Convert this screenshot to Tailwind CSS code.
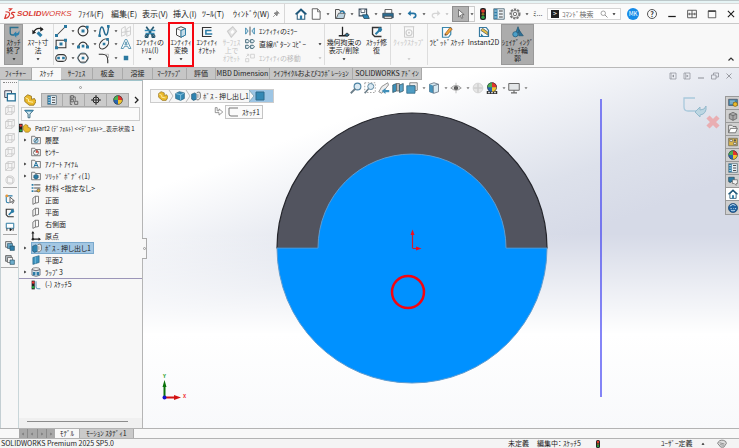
<!DOCTYPE html>
<html lang="ja">
<head>
  <meta charset="UTF-8">
  <meta name="viewport" content="width=device-width, initial-scale=1.0">
  <script src="https://cdn.jsdelivr.net/npm/@tailwindcss/browser@4"></script>
  <title>SOLIDWORKS - Part2</title>
</head>
<body class="h-screen flex flex-col overflow-hidden bg-[#f7f7f7] text-[#1c1c1c] text-[7px] leading-[7px] whitespace-nowrap font-['Noto_Sans_CJK_JP',sans-serif] [font-feature-settings:'palt']">

  <!-- Icon sprite -->
  <svg class="hidden" aria-hidden="true">
    <symbol id="caret" viewBox="0 0 8 8"><path d="M1 2.500h6L4 6.500z" fill="currentColor"/></symbol>
    <symbol id="home" viewBox="0 0 16 16"><path d="M3 8v7h10V8L8 3z" fill="#fff" stroke="#2f5f7c" stroke-width="1.4"/><path d="M.8 8.5 8 1.8l7.2 6.7" fill="none" stroke="#1c567a" stroke-width="2"/><path d="M6.5 15v-5h3v5z" fill="#2d7ba6"/></symbol>
    <symbol id="page" viewBox="0 0 16 16"><path d="M3 1h7l3.5 3.5V15H3z" fill="#fdfdfd" stroke="#555" stroke-width="1.2"/><path d="M10 1v4h3.5" fill="none" stroke="#555"/></symbol>
    <symbol id="open" viewBox="0 0 16 16"><path d="M2 14V2h5l1 2h5v10z" fill="#eee" stroke="#444" stroke-width="1.2"/><path d="M3 14 6 7h9l-2 7z" fill="#bcd3e0" stroke="#444"/><path d="M8 6q4-4 6 1" fill="none" stroke="#1f79ab" stroke-width="1.8"/></symbol>
    <symbol id="save" viewBox="0 0 16 16"><path d="M1.5 1.5h10v9h-10z" fill="#eef4f7" stroke="#345" stroke-width="1.4"/><path d="M4 2v4h5V2" fill="#fff" stroke="#345"/><path d="M6 9h7l2 5H8z" fill="#2b84b5" stroke="#245"/></symbol>
    <symbol id="print" viewBox="0 0 16 16"><path d="M4 7V2h9v5" fill="#fff" stroke="#555" stroke-width="1.2"/><path d="M1 7h14v6H1z" fill="#2c6d92" stroke="#2b4252"/><path d="M3 11h10v3H3z" fill="#ddd" stroke="#444"/></symbol>
    <symbol id="undo" viewBox="0 0 16 16"><path d="M3 7h7q4 0 4 3.5T10 14" fill="none" stroke="currentColor" stroke-width="2.6"/><path d="M1 7l5-5v9z" fill="currentColor"/></symbol>
    <symbol id="redo" viewBox="0 0 16 16"><path d="M13 7H6q-4 0-4 3.5T6 14" fill="none" stroke="#d5d5d5" stroke-width="2"/><path d="M15 7l-5-5v9z" fill="#d5d5d5"/></symbol>
    <symbol id="pointer" viewBox="0 0 16 16"><path d="M4 1v12l3-3 2 5 2-1-2-5h4z" fill="#f4f4f4" stroke="#444"/></symbol>
    <symbol id="traffic" viewBox="0 0 16 16"><rect x="4" y="0" width="8" height="16" rx="3" fill="#222"/><circle cx="8" cy="4" r="2.4" fill="#e2392b"/><circle cx="8" cy="8.3" r="1.8" fill="#8a7a22"/><circle cx="8" cy="12.4" r="2.2" fill="#2ca045"/></symbol>
    <symbol id="props" viewBox="0 0 16 16"><path d="M1 1h14v14H1z" fill="#e8eff3" stroke="#3c5868"/><path d="M1.5 1.5H6v13H1.5z" fill="#2f7ea9"/><path d="M8 4h5M8 8h5M8 12h5" stroke="#444" stroke-width="1.5"/><path d="M2 4h3M2 8h3M2 12h3" stroke="#fff"/></symbol>
    <symbol id="gear" viewBox="0 0 16 16"><circle cx="8" cy="8" r="6.2" fill="none" stroke="#777" stroke-width="2.4" stroke-dasharray="3 1.5"/><circle cx="8" cy="8" r="5" fill="#f4f4f4" stroke="#666"/><circle cx="8" cy="8" r="2.3" fill="none" stroke="#666" stroke-width="1.2"/></symbol>
    <symbol id="pin" viewBox="0 0 16 16"><path d="M2 14l5-5M9 1l6 6M10 3 6 6 4 6l6 6 0-2 3-4z" fill="#888" stroke="#777" stroke-width="1.3"/></symbol>
    <symbol id="glass" viewBox="0 0 16 16"><circle cx="6.5" cy="6.5" r="4.5" fill="none" stroke="#777" stroke-width="1.3"/><path d="M10 10l5 5" stroke="#777" stroke-width="1.6"/></symbol>
    <symbol id="close" viewBox="0 0 16 16"><path d="M3 3l10 10M13 3 3 13" stroke="currentColor" stroke-width="1.7"/></symbol>
    <symbol id="mini" viewBox="0 0 16 16"><path d="M2 12h12" stroke="currentColor" stroke-width="2"/></symbol>
    <symbol id="dock" viewBox="0 0 16 16"><path d="M1 2h14v12H1zM8 2v12M1 8h14" fill="none" stroke="#555" stroke-width="1.5"/><path d="M4 6v4M12 6v4" stroke="#555"/></symbol>
    <symbol id="max" viewBox="0 0 16 16"><path d="M2 3h12v11H2z" fill="none" stroke="#444" stroke-width="1.3"/><path d="M2 3.5h12" stroke="#444" stroke-width="2.5"/></symbol>
    <symbol id="restore" viewBox="0 0 16 16"><path d="M1 6h9v8H1zM5 6V2h10v8h-5" fill="none" stroke="currentColor" stroke-width="1.5"/></symbol>
    <symbol id="paneL" viewBox="0 0 16 16"><path d="M2 2h12v12H2z" fill="none" stroke="currentColor" stroke-width="1.4"/><path d="M10 5v6L6 8z" fill="currentColor"/><path d="M4.500 2v12" stroke="currentColor"/></symbol>
    <symbol id="paneR" viewBox="0 0 16 16"><path d="M2 2h12v12H2z" fill="none" stroke="currentColor" stroke-width="1.4"/><path d="M7 5v6l4-3z" fill="currentColor"/><path d="M5 2v12" stroke="currentColor"/></symbol>

    <symbol id="exitSketch" viewBox="0 0 16 16"><path d="M14 2H3v7q0 3 3 3h2" fill="none" stroke="#2b708f" stroke-width="1.8"/><path d="M7 11l4-4v2.500q3 0 4-4 1.500 7-4 7.500v2.500z" fill="#2b7fac"/></symbol>
    <symbol id="dimension" viewBox="0 0 16 16"><path d="M2 9q3-8 12-5" fill="none" stroke="#222" stroke-width="1.8"/><path d="M.5 5v6l5-2zM11 .5v7l4.500-3z" fill="#222"/><path d="M6 10l3-3 5 5-3 3z" fill="#2b7ca6"/></symbol>
    <symbol id="line" viewBox="0 0 16 16"><path d="M2 14 14 2" stroke="#444" stroke-width="1.4"/><path d="M0 12h4v4H0zM12 0h4v4h-4z" fill="#2a789f"/></symbol>
    <symbol id="circle" viewBox="0 0 16 16"><circle cx="8" cy="8" r="6.5" fill="none" stroke="#333" stroke-width="1.5"/><path d="M6 6h4v4H6zM12 1h3.500v3.500H12z" fill="#2a789f"/></symbol>
    <symbol id="spline" viewBox="0 0 16 16"><path d="M2 14C3 0 6 0 8 8s5 8 6-6" fill="none" stroke="#24688d" stroke-width="1.9"/><path d="M.5 12.500H4V16H.5zM12 0h3.500v3.500H12z" fill="#2a789f"/></symbol>
    <symbol id="plane3" viewBox="0 0 16 16"><path d="M2 5l5-3v11l-5 2zM9 5l5-3v11l-5 2zM2 10l12-2" fill="none" stroke="#ccc" stroke-width="1.2"/></symbol>
    <symbol id="rect" viewBox="0 0 16 16"><path d="M1.500 3h13v10h-13z" fill="none" stroke="#333" stroke-width="1.4"/><path d="M6 6h4v4H6zM0 11h4v4H0zM12 1h4v4h-4z" fill="#2a789f"/></symbol>
    <symbol id="arc" viewBox="0 0 16 16"><path d="M2 12a6 6.500 0 0 1 12 0" fill="none" stroke="#333" stroke-width="1.5"/><path d="M0 10h4v4H0zM12 10h4v4h-4zM6.300 9h3.500v3.500H6.300z" fill="#2a789f"/></symbol>
    <symbol id="ellipse" viewBox="0 0 16 16"><ellipse cx="8" cy="8" rx="7.500" ry="5" transform="rotate(-50 8 8)" fill="none" stroke="#333" stroke-width="1.3"/><path d="M6.300 6.300h3.500v3.500H6.300zM11 0h3.500v3.500H11z" fill="#2a789f"/></symbol>
    <symbol id="textA" viewBox="0 0 16 16"><path d="M1.500 14 7 2h2l5.500 12h-3l-1.300-3H6l-1.500 3zM6.500 9h3L8 5z" fill="#fff" stroke="#4d8dab" stroke-width="1.2"/></symbol>
    <symbol id="slot" viewBox="0 0 16 16"><rect x="1" y="3.500" width="14" height="9" rx="4.500" fill="none" stroke="#333" stroke-width="1.400"/><path d="M3 6.300h3.500v3.500H3zM9.500 6.300H13v3.500H9.500z" fill="#2a789f"/></symbol>
    <symbol id="polygon" viewBox="0 0 16 16"><circle cx="8" cy="8" r="7" fill="none" stroke="#6b95ab"/><path d="M4.500 2.500h7L15 8l-3.500 5.500h-7L1 8z" fill="none" stroke="#333" stroke-width="1.300"/><path d="M6.300 6.300h3.500v3.500H6.300z" fill="#2a789f"/></symbol>
    <symbol id="fillet" viewBox="0 0 16 16"><path d="M1 3h5q7 0 7 8v4" fill="none" stroke="#333" stroke-width="1.500"/><path d="M9 3h5v5" fill="none" stroke="#aaa"/></symbol>
    <symbol id="point" viewBox="0 0 16 16"><path d="M5 5h6v6H5z" fill="#2a789f"/></symbol>
    <symbol id="trim" viewBox="0 0 16 16"><path d="M3 1l10 14M13 1 3 15" stroke="#24566f" stroke-width="2.200"/><path d="M1 6h14M2 10h12" stroke="#348ab5" stroke-width="1.800"/><circle cx="3.500" cy="13.500" r="2" fill="none" stroke="#24566f" stroke-width="1.500"/><circle cx="12.500" cy="13.500" r="2" fill="none" stroke="#24566f" stroke-width="1.500"/></symbol>
    <symbol id="convert" viewBox="0 0 16 16"><path d="M2 3.500 8 1l6 2.500v8.500l-6 3-6-3z" fill="#fafafa" stroke="#333" stroke-width="1.200"/><path d="M2 3.500 8 6l6-2.500M8 6v9" fill="none" stroke="#666"/><path d="M8 6l6-2.500V12l-6 3z" fill="#c5dbe7" stroke="#2e7fa8" stroke-width="1.300"/></symbol>
    <symbol id="offset" viewBox="0 0 16 16"><path d="M14 2H2v12h12" fill="none" stroke="#333" stroke-width="1.500"/><path d="M14 6H6.500v4.500H15" fill="none" stroke="#2a7ca6" stroke-width="2"/></symbol>
    <symbol id="surfOffset" viewBox="0 0 16 16"><path d="M2 7l7-6 5 6-7 8z" fill="#e5e5e5" stroke="#ccc" stroke-width="1.500"/><path d="M6 8l3-3 2 3-3 3z" fill="#fff"/></symbol>
    <symbol id="mirror" viewBox="0 0 16 16"><path d="M1 3v10l4-5zM15 3v10l-4-5z" fill="#d7e8f0" stroke="#2e7fa8" stroke-width="1.300"/><path d="M8 1v14" stroke="#333" stroke-width="1.300"/></symbol>
    <symbol id="pattern" viewBox="0 0 16 16"><g fill="#e6f0f5" stroke="#345b6d" stroke-width="1.400"><path d="M1 1h4l2 2.300L5 6H1zM9 1h4l2 2.300L13 6H9zM1 10h4l2 2.300L5 15H1zM9 10h4l2 2.300L13 15H9z"/></g></symbol>
    <symbol id="move" viewBox="0 0 16 16"><path d="M1 9h5v5H1zM9 2h6v6H9zM2 6l4-4M6 2H3M6 2v3" fill="none" stroke="#ccc" stroke-width="1.300"/></symbol>
    <symbol id="relations" viewBox="0 0 16 16"><path d="M6 1v12M1 13h10" stroke="#222" stroke-width="1.700"/><path d="M9 12q3-5 6 0-3 4-6 0z" fill="#34718f" stroke="#222"/></symbol>
    <symbol id="repair" viewBox="0 0 16 16"><path d="M14 2H2v9l3 3h9" fill="none" stroke="#333" stroke-width="1.800"/><path d="M6 11l5-5" stroke="#2a7ca6" stroke-width="2.600"/><path d="M10 2q4-1 5 3l-2 3-4-1z" fill="#2a7ca6"/></symbol>
    <symbol id="snap" viewBox="0 0 16 16"><path d="M1 1h14M2 1v14h12V1" fill="none" stroke="#ccc" stroke-width="1.300"/><circle cx="8" cy="9" r="4" fill="none" stroke="#ccc" stroke-width="1.500"/><circle cx="8" cy="9" r="1.300" fill="#ccc"/></symbol>
    <symbol id="rapid" viewBox="0 0 16 16"><path d="M2 2h11v9l-3 4H2z" fill="#f8fbfc" stroke="#3a87ad" stroke-width="1.600"/><path d="M5 11 12 2l3 2-7 8z" fill="#f1a93b" stroke="#9e5622"/><path d="M5 11l3 1-3 1z" fill="#333"/></symbol>
    <symbol id="instant" viewBox="0 0 16 16"><path d="M2 2h9l3 4v8H2z" fill="#f7fafb" stroke="#3579a0" stroke-width="1.600"/><path d="M4 6l9 6v-4L6 3z" fill="#eabf42" stroke="#4a5c66"/><path d="M4 10l4 4H4z" fill="#2a7ca6"/></symbol>
    <symbol id="shade" viewBox="0 0 16 16"><path d="M5 9 8 1l3 8z" fill="#2b7ba6" stroke="#245672"/><circle cx="4.500" cy="11" r="3.500" fill="#4b9fc7" stroke="#235a78"/><path d="M9 5l6 8H9z" fill="#2f7096" stroke="#235a78"/></symbol>

    <symbol id="part" viewBox="0 0 16 16"><path d="M1 4l4-3 5 2v4l4-1 2 4-3 5-6 0-6-5z" fill="#eab92b" stroke="#8b6914"/><path d="M2 5l4 2v3l6 1" fill="none" stroke="#fff1b0" stroke-width="1.300"/></symbol>
    <symbol id="config" viewBox="0 0 16 16"><path d="M3 1h4v4H3zM3 7h4v4H3zM9 10h5v5H9zM2 1v14h3M7 3h3v6" fill="none" stroke="#555" stroke-width="1.300"/></symbol>
    <symbol id="target" viewBox="0 0 16 16"><circle cx="8" cy="8" r="4.800" fill="none" stroke="#222" stroke-width="1.600"/><path d="M8 0v16M0 8h16" stroke="#222" stroke-width="1.500"/></symbol>
    <symbol id="ball" viewBox="0 0 16 16"><circle cx="8" cy="8" r="7.300" fill="#2865ae"/><path d="M8 8V.7A7.300 7.300 0 0 0 .7 8z" fill="#4db04f"/><path d="M8 8V.7A7.300 7.300 0 0 1 15.300 8z" fill="#e2352c"/><path d="M8 8h7.300A7.300 7.300 0 0 1 8 15.300z" fill="#f2c52e"/><circle cx="8" cy="8" r="7" fill="none" stroke="#333" stroke-width=".8"/></symbol>
    <symbol id="funnel" viewBox="0 0 16 16"><path d="M1 2h14l-5.500 6v6h-3V8z" fill="#d8edf5" stroke="#37667d" stroke-width="1.500"/><path d="M2 3h12" stroke="#2a7ca6" stroke-width="2"/></symbol>
    <symbol id="folder" viewBox="0 0 16 16"><path d="M1 14V2h5l1 2h8v10z" fill="#f6f6f6" stroke="#555" stroke-width="1.200"/></symbol>
    <symbol id="history" viewBox="0 0 16 16"><use href="#folder"/><circle cx="8" cy="9" r="3.500" fill="#b9d9e8" stroke="#276e94"/><path d="M6 11l5-6" stroke="#26343c" stroke-width="1.300"/></symbol>
    <symbol id="sensor" viewBox="0 0 16 16"><use href="#folder"/><circle cx="8" cy="9" r="4" fill="#fff" stroke="#333"/><path d="M8 9V5a4 4 0 0 1 4 4z" fill="#d9483e"/><path d="M5 6l3 3" stroke="#333"/></symbol>
    <symbol id="note" viewBox="0 0 16 16"><use href="#folder"/><path d="M4.500 13 8 5l3.500 8M6 10.500h4" fill="none" stroke="#20719b" stroke-width="1.600"/></symbol>
    <symbol id="solids" viewBox="0 0 16 16"><use href="#folder"/><path d="M4.500 7 8 5.500 11.500 7v4L8 13l-3.500-2z" fill="#2b7aa4" stroke="#1f4e67"/></symbol>
    <symbol id="material" viewBox="0 0 16 16"><path d="M1 3h3M1 8h3M1 13h3" stroke="#2a7ca6" stroke-width="2.500"/><path d="M5 3h10M5 8h10M5 13h8" stroke="#444" stroke-width="1.500"/><circle cx="12" cy="12" r="2.500" fill="#e8b93b" stroke="#444"/></symbol>
    <symbol id="plane" viewBox="0 0 16 16"><path d="M3 5l4-3v11l-4 2zM7 2h5v10l-5 1" fill="#fafafa" stroke="#555" stroke-width="1.200"/></symbol>
    <symbol id="planeBlue" viewBox="0 0 16 16"><path d="M3 4l10-3v11L3 15z" fill="#3d93bf" stroke="#245d7c"/><path d="M7 3v11" stroke="#8fcbe6"/></symbol>
    <symbol id="origin" viewBox="0 0 16 16"><path d="M3 2v11h11" fill="none" stroke="#222" stroke-width="1.800"/><path d="M.5 4 3 0l2.500 4zM12 10.500l4 2.500-4 2.500z" fill="#222"/><circle cx="3" cy="13" r="2" fill="#222"/></symbol>
    <symbol id="extrude" viewBox="0 0 16 16"><path d="M1 5l5-2 3 2v8l-5 2-3-2z" fill="#2f83b0" stroke="#1e4f6a"/><path d="M9 3q2-2 5-1l1 3v6q-3 5-6 3" fill="#ececec" stroke="#555" stroke-width="1.200"/><path d="M11 5v6" stroke="#666"/></symbol>
    <symbol id="wrap" viewBox="0 0 16 16"><ellipse cx="8" cy="3.500" rx="6.500" ry="2.500" fill="#eee" stroke="#555"/><path d="M1.500 4v9q6.500 4 13 0V4q-6.500 4-13 0z" fill="#d5e3ea" stroke="#445"/><path d="M3 8h4v5H3zM9 8h4v5H9z" fill="#2b7ba6"/></symbol>
    <symbol id="sketch" viewBox="0 0 16 16"><path d="M1 1h5v14H1z" fill="#222"/><circle cx="3.500" cy="4" r="2" fill="#e33"/><circle cx="3.500" cy="11.500" r="2" fill="#2a4"/><path d="M8 2v9q0 3 3 3h4" fill="none" stroke="#2e7fa8" stroke-width="1.300"/></symbol>
    <symbol id="partLight" viewBox="0 0 20 16"><path d="M0 1h6v14H0z" fill="#222"/><circle cx="3" cy="4" r="2" fill="#e33"/><circle cx="3" cy="12" r="2" fill="#2a4"/><path d="M7 5l4-3 4 2v3l4 1v4l-3 3-5 0-4-4z" fill="#eab92b" stroke="#8b6914"/></symbol>

    <symbol id="cubeBlue" viewBox="0 0 16 16"><path d="M1 4l6-3 8 2v9l-6 3-8-3z" fill="#3388b3" stroke="#1f5876"/><path d="M1 4l8 2 6-3M9 6v9" fill="none" stroke="#9fd2ea" stroke-width="1.200"/></symbol>
    <symbol id="cubes" viewBox="0 0 16 16"><path d="M1 1h9v9H1z" fill="#e9f1f5" stroke="#445" stroke-width="1.300"/><path d="M4.500 5H15v9.500H4.500z" fill="#fbfdfe" stroke="#277196" stroke-width="1.700"/></symbol>
    <symbol id="cubeWire" viewBox="0 0 16 16"><path d="M1 4h10v11H1zM1 4l4-3h10v10l-4 4M11 4l4-3M5 1v10h10M5 11l-4 4" fill="none" stroke="#c6c6c6" stroke-width="1.300"/></symbol>
    <symbol id="sphereWire" viewBox="0 0 16 16"><circle cx="8" cy="8" r="6.500" fill="none" stroke="#c4c4c4" stroke-width="1.300"/><path d="M4 3v9l8 1V5zM4 3l8 2" fill="none" stroke="#c4c4c4"/></symbol>
    <symbol id="pick" viewBox="0 0 16 16"><path d="M12 3H2v8q0 3 3 3h2" fill="none" stroke="#2b7ba6" stroke-width="1.700"/><path d="M8 5v9l2-2 2 3 1.500-1-1.500-3h3z" fill="#fff" stroke="#333" stroke-width="1.200"/><circle cx="3" cy="3" r="2.300" fill="#e89636"/></symbol>
    <symbol id="screenL" viewBox="0 0 16 16"><path d="M2 2h12v8H2z" fill="#fff" stroke="#2d7ba3" stroke-width="1.600"/><path d="M3 10v4M8 10v4l3-2M13 10v4" stroke="#333" stroke-width="1.500"/></symbol>
    <symbol id="layers" viewBox="0 0 16 16"><path d="M1 1h9v9H1z" fill="#e4ebee" stroke="#444" stroke-width="1.200"/><path d="M4 4h8v8H4z" fill="#62a4c5" stroke="#335566"/><path d="M8 8h7v7H8z" fill="#2f7fa9" stroke="#244b5e"/></symbol>
    <symbol id="layersOut" viewBox="0 0 16 16"><path d="M1 1h9v9H1z" fill="#b9c4c9" stroke="#444" stroke-width="1.200"/><path d="M4 4h8v8H4z" fill="#f2f2f2" stroke="#444"/><path d="M8 8h7v7H8z" fill="#6eaecd" stroke="#244b5e"/></symbol>

    <symbol id="zoomArea" viewBox="0 0 16 16"><path d="M1 1h14v13H1z" fill="none" stroke="#888" stroke-dasharray="2 2"/><circle cx="9" cy="6" r="4" fill="#dbeaf3" stroke="#5d87a0" stroke-width="1.300"/><path d="M6 9l-5 6" stroke="#6b7e89" stroke-width="2"/></symbol>
    <symbol id="zoomFit" viewBox="0 0 16 16"><circle cx="10" cy="6" r="4.500" fill="#dbeaf3" stroke="#4c82a2" stroke-width="1.500"/><path d="M7 9l-6 6" stroke="#6b7e89" stroke-width="2.400"/></symbol>
    <symbol id="prevView" viewBox="0 0 16 16"><path d="M13 1 5 6l-4 7 4 2 5-6 4-5z" fill="#eee" stroke="#777"/><path d="M5 12l5-4v2.500h5v3h-5V16z" fill="#418fb8"/></symbol>
    <symbol id="section" viewBox="0 0 16 16"><path d="M1 4l5-2v10l-5 2z" fill="#3b8eb8" stroke="#335566"/><path d="M6 2h4v10H6z" fill="#bbb" stroke="#666"/><path d="M10 4l5-2v10l-5 2z" fill="#5ba4c9" stroke="#335566"/></symbol>
    <symbol id="orient" viewBox="0 0 16 16"><path d="M5 1h10v10l-3 1V5H5z" fill="#eee" stroke="#666"/><path d="M1 5h11v10H1z" fill="#4e9cc3" stroke="#2d6584"/></symbol>
    <symbol id="display" viewBox="0 0 16 16"><path d="M2 3l6-2 6 2v10l-6 2-6-2z" fill="#d8e9f1" stroke="#567"/><path d="M7 5l-5-2v10l5 2z" fill="#4594bc"/><path d="M7 5l7-2M7 5v10" stroke="#567"/></symbol>
    <symbol id="eye" viewBox="0 0 16 16"><path d="M1 8q7-7 14 0-7 6-14 0z" fill="#ddd" stroke="#888"/><circle cx="8" cy="8" r="2.600" fill="#333"/><path d="M8 1v14" stroke="#aaa"/></symbol>
    <symbol id="ballGray" viewBox="0 0 16 16"><circle cx="8" cy="8" r="6.500" fill="#e6e6e6" stroke="#ccc"/><path d="M8 2v12M2 8h12" stroke="#cfcfcf" stroke-width="2"/></symbol>
    <symbol id="scene" viewBox="0 0 16 16"><path d="M1 12h14v4H1z" fill="#333"/><path d="M3 14h2M7 14h2M11 14h2" stroke="#fff" stroke-width="2"/><use href="#ball" width="14" height="14" x="1"/></symbol>
    <symbol id="monitor" viewBox="0 0 16 16"><path d="M1 2h14v9H1z" fill="#e3e6e8" stroke="#666" stroke-width="1.300"/><path d="M8 11v3M4 14.500h8" stroke="#666" stroke-width="1.500"/></symbol>
    <symbol id="bigArrow" viewBox="0 0 16 16"><path d="M2 1v8h6v4l6-5-6-5v3H5V1z" fill="#fff" stroke="#777" stroke-width="1.200"/></symbol>
    <symbol id="resources" viewBox="0 0 16 16"><path d="M1 2h14v10H1z" fill="#4589ad" stroke="#445"/><path d="M3 5h8M3 8h5" stroke="#e5f2f8"/><circle cx="11.500" cy="10" r="3.500" fill="#eab92b" stroke="#7c5d12"/></symbol>
    <symbol id="library" viewBox="0 0 16 16"><path d="M2 5l6-3 6 3v7l-6 3-6-3z" fill="#a7a7a7" stroke="#555"/><path d="M2 5l6 2.500L14 5M8 7.500V15" fill="none" stroke="#555"/></symbol>
    <symbol id="folderOpen" viewBox="0 0 16 16"><path d="M1 14V2h5l2 2h5v3" fill="#eee" stroke="#555" stroke-width="1.200"/><path d="M1 14 4 7h11l-3 7z" fill="#fff" stroke="#555" stroke-width="1.200"/></symbol>
    <symbol id="palette" viewBox="0 0 16 16"><path d="M1 2h14v12H1z" fill="#d9b44a" stroke="#555"/><path d="M3 4h4v3H3zM9 9h4v3H9z" fill="#fff" stroke="#555"/><circle cx="11" cy="5.500" r="1.800" fill="#555"/></symbol>
    <symbol id="chat" viewBox="0 0 16 16"><path d="M1 2h9v7H5l-2 2V9H1z" fill="#2f7da7" stroke="#245"/><path d="M7 6h8v6h-2v3l-3-3H7z" fill="#f3f3f3" stroke="#555"/></symbol>
    <symbol id="globe" viewBox="0 0 16 16"><circle cx="8" cy="8" r="7.300" fill="#1f62a0" stroke="#123b66"/><path d="M3 5q5-5 9-1M4 9h2M8 9h1M11 9h2M5 12q3 1 6 0" fill="none" stroke="#cfe6f7" stroke-width="1.500"/></symbol>
    <symbol id="tag" viewBox="0 0 16 16"><path d="M1 7q2-6 9-5 5 1 5 5l-4 6H6z" fill="#ddd" stroke="#666" stroke-width="1.200"/><path d="M4 6l8 2M5 9l6 1" stroke="#666"/></symbol>
  </svg>

  <div class="h-1 shrink-0 bg-[#e6f4f5] border-t border-b border-t-[#bcc8ca] border-b-[#d9d9d9]"></div>

  <!-- Title bar -->
  <header class="h-5 shrink-0 flex items-center bg-[#fafafa] border-b border-[#c9c9c9]">
    <div class="w-[76px] shrink-0 pl-1 flex items-center gap-px text-[#d93a32]">
      <svg class="size-3 shrink-0" viewBox="0 0 16 16" fill="none" stroke="currentColor" stroke-width="1.600"><path d="M6 1h4L7 4M2 5q7 0 5 5-2 4-6 4l2-6M15 6q-5-1-5 1.500 4 2 3 4.500-2 2-5 1.500"/></svg>
      <h1 class="text-[8px] font-['Liberation_Sans'] italic font-bold">SOLID<span class="font-normal">WORKS</span></h1>
    </div>
    <nav class="shrink-0 flex items-center text-[8px]">
      <a href="#" class="w-[33px] pl-0.5">ﾌｧｲﾙ(F)</a>
      <a href="#" class="w-[31px] pl-0.5">編集(E)</a>
      <a href="#" class="w-[31px] pl-0.5">表示(V)</a>
      <a href="#" class="w-[29px] pl-0.5">挿入(I)</a>
      <a href="#" class="w-[31px] pl-0.5">ﾂｰﾙ(T)</a>
      <a href="#" class="w-[41px] pl-0.5">ｳｨﾝﾄﾞｳ(W)</a>
    </nav>
    <button aria-label="固定" class="w-3 shrink-0"><svg class="size-2"><use href="#pin"/></svg></button>
    <div class="h-full w-px shrink-0 bg-[#d8d8d8] mr-[7px]"></div>
    <div class="shrink-0 flex items-center text-[#444]">
      <button aria-label="ホーム" class="w-[18px] flex justify-center"><svg class="size-3"><use href="#home"/></svg></button>
      <button aria-label="新規" class="w-3"><svg class="size-3"><use href="#page"/></svg></button>
      <button aria-label="新規メニュー" class="w-3 flex justify-center"><svg class="size-1"><use href="#caret"/></svg></button>
      <button aria-label="開く" class="w-3"><svg class="size-3"><use href="#open"/></svg></button>
      <button aria-label="開くメニュー" class="w-3 flex justify-center"><svg class="size-1"><use href="#caret"/></svg></button>
      <button aria-label="保存" class="w-3"><svg class="size-3"><use href="#save"/></svg></button>
      <button aria-label="保存メニュー" class="w-3 flex justify-center"><svg class="size-1"><use href="#caret"/></svg></button>
      <button aria-label="印刷" class="w-3"><svg class="size-3"><use href="#print"/></svg></button>
      <button aria-label="印刷メニュー" class="w-3 flex justify-center"><svg class="size-1"><use href="#caret"/></svg></button>
      <button aria-label="元に戻す" class="w-3 text-[#2273a3] flex justify-center"><svg class="size-2.5"><use href="#undo"/></svg></button>
      <button aria-label="元に戻すメニュー" class="w-3 flex justify-center"><svg class="size-1"><use href="#caret"/></svg></button>
      <button aria-label="やり直し" class="w-3 flex justify-center"><svg class="size-2.5"><use href="#redo"/></svg></button>
      <button aria-label="やり直しメニュー" class="w-2.5 flex justify-center text-[#bbb]"><svg class="size-1"><use href="#caret"/></svg></button>
      <button aria-label="選択" class="w-[17px] h-4 flex items-center justify-center bg-[#b2b2b2] border border-[#8f8f8f]"><svg class="size-2.5"><use href="#pointer"/></svg></button>
      <button aria-label="選択メニュー" class="w-1.5 h-4 flex items-center justify-center border border-l-0 border-[#ccc]"><svg class="size-1"><use href="#caret"/></svg></button>
      <button aria-label="再構築" class="w-4 flex justify-center"><svg class="size-3"><use href="#traffic"/></svg></button>
      <button aria-label="プロパティ" class="w-4 flex justify-center"><svg class="size-3"><use href="#props"/></svg></button>
      <button aria-label="オプション" class="w-4 flex justify-center"><svg class="size-3"><use href="#gear"/></svg></button>
      <button aria-label="オプションメニュー" class="w-2 flex justify-center"><svg class="size-1"><use href="#caret"/></svg></button>
      <span class="pl-0.5">ﾐ...</span>
    </div>
    <div class="ml-auto shrink-0 flex items-center">
      <label class="w-[74px] h-3 flex items-center bg-white border border-[#d4d4d4] mr-1.5">
        <span class="size-2 mx-[3px] bg-[#222] text-white text-center shrink-0">&gt;</span>
        <input type="text" aria-label="コマンド検索" placeholder="ｺﾏﾝﾄﾞ検索" class="flex-1 min-w-0 placeholder:text-[#666] outline-none">
        <svg class="size-2 mr-1 shrink-0"><use href="#glass"/></svg>
        <svg class="size-1 mr-1 shrink-0"><use href="#caret"/></svg>
      </label>
      <button class="size-3 rounded-full bg-[#168be8] text-white text-[6px] mr-2">MK</button>
      <button class="size-2.5 rounded-full border border-[#555] text-[7px] leading-[8px] font-bold mr-[5px]">?</button>
      <button aria-label="最小化" class="w-5 flex justify-center"><svg class="size-2.5"><use href="#mini"/></svg></button>
      <button aria-label="ドック" class="w-5 flex justify-center"><svg class="size-2.5"><use href="#dock"/></svg></button>
      <button aria-label="最大化" class="w-5 flex justify-center"><svg class="size-2.5"><use href="#max"/></svg></button>
      <button aria-label="閉じる" class="w-[17px] flex justify-center"><svg class="size-2.5"><use href="#close"/></svg></button>
    </div>
  </header>

  <!-- Ribbon -->
  <div class="h-11 shrink-0 flex bg-[#f8f8f8] border-b border-[#b9b9b9] pl-1 leading-[8px]">
    <button class="w-[19px] mb-0.5 pt-px flex flex-col items-center bg-[#acacac] border border-[#999]"><svg class="size-3"><use href="#exitSketch"/></svg><span>ｽｹｯﾁ<br>終了</span><svg class="size-1 mt-auto mb-[3px]"><use href="#caret"/></svg></button>
    <button class="w-[31px] mb-0.5 pt-0.5 flex flex-col items-center border-r border-[#ddd]"><svg class="size-3"><use href="#dimension"/></svg><span>ｽﾏｰﾄ寸<br>法</span><svg class="size-1 mt-auto mb-1"><use href="#caret"/></svg></button>

    <div class="grid grid-cols-4 w-[80px] mb-0.5 pl-px border-r border-[#ddd] text-[#444]">
      <button aria-label="直線" class="flex items-center gap-1"><svg class="size-3 shrink-0"><use href="#line"/></svg><svg class="size-1 shrink-0"><use href="#caret"/></svg></button>
      <button aria-label="円" class="flex items-center gap-1 pl-0.5"><svg class="size-3 shrink-0"><use href="#circle"/></svg><svg class="size-1 shrink-0"><use href="#caret"/></svg></button>
      <button aria-label="スプライン" class="flex items-center gap-1 pl-1"><svg class="size-3 shrink-0"><use href="#spline"/></svg><svg class="size-1 shrink-0"><use href="#caret"/></svg></button>
      <button aria-label="平面" class="flex items-center pl-[6px]"><svg class="size-3 shrink-0"><use href="#plane3"/></svg></button>
      <button aria-label="矩形" class="flex items-center gap-1"><svg class="size-3 shrink-0"><use href="#rect"/></svg><svg class="size-1 shrink-0"><use href="#caret"/></svg></button>
      <button aria-label="円弧" class="flex items-center gap-1 pl-0.5"><svg class="size-3 shrink-0"><use href="#arc"/></svg><svg class="size-1 shrink-0"><use href="#caret"/></svg></button>
      <button aria-label="楕円" class="flex items-center gap-1 pl-1"><svg class="size-3 shrink-0"><use href="#ellipse"/></svg><svg class="size-1 shrink-0"><use href="#caret"/></svg></button>
      <button aria-label="テキスト" class="flex items-center pl-[6px]"><svg class="size-3 shrink-0"><use href="#textA"/></svg></button>
      <button aria-label="スロット" class="flex items-center gap-1"><svg class="size-3 shrink-0"><use href="#slot"/></svg><svg class="size-1 shrink-0"><use href="#caret"/></svg></button>
      <button aria-label="多角形" class="flex items-center pl-0.5"><svg class="size-3 shrink-0"><use href="#polygon"/></svg></button>
      <button aria-label="フィレット" class="flex items-center gap-1 pl-1"><svg class="size-3 shrink-0"><use href="#fillet"/></svg><svg class="size-1 shrink-0"><use href="#caret"/></svg></button>
      <button aria-label="点" class="flex items-center pl-[6px]"><svg class="size-3 shrink-0"><use href="#point"/></svg></button>
    </div>

    <button class="w-8 pt-0.5 flex flex-col items-center"><svg class="size-3"><use href="#trim"/></svg><span>ｴﾝﾃｨﾃｨの<br>ﾄﾘﾑ(I)</span><svg class="size-1 mt-auto mb-1.5"><use href="#caret"/></svg></button>
    <button class="relative w-[26px] mx-0.5 pt-0.5 flex flex-col items-center"><svg class="size-3"><use href="#convert"/></svg><span>ｴﾝﾃｨﾃｨ<br>変換</span><svg class="size-1 mt-auto mb-1.5"><use href="#caret"/></svg><span class="absolute -top-0.5 inset-x-0 bottom-0 border-2 border-[#f5050f]"></span></button>
    <button class="w-[22px] pt-0.5 flex flex-col items-center"><svg class="size-3"><use href="#offset"/></svg><span>ｴﾝﾃｨﾃｨ<br>ｵﾌｾｯﾄ</span></button>
    <button disabled class="w-[27px] pt-0.5 flex flex-col items-center text-[#c4c4c4]"><svg class="size-3"><use href="#surfOffset"/></svg><span>ｻｰﾌｪｽ<br>上で<br>ｵﾌｾｯﾄ</span></button>
    <div class="w-20 mb-0.5 grid border-r border-[#ddd]">
      <button class="flex items-center gap-1"><svg class="size-2.5"><use href="#mirror"/></svg>ｴﾝﾃｨﾃｨのﾐﾗｰ</button>
      <button class="flex items-center gap-1"><svg class="size-2.5"><use href="#pattern"/></svg>直線ﾊﾟﾀｰﾝ ｺﾋﾟｰ<svg class="size-1 ml-auto mr-0.5"><use href="#caret"/></svg></button>
      <button disabled class="flex items-center gap-1 text-[#bbb]"><svg class="size-2.5"><use href="#move"/></svg>ｴﾝﾃｨﾃｨの移動<svg class="size-1 ml-auto mr-0.5"><use href="#caret"/></svg></button>
    </div>

    <button class="w-[38px] pt-0.5 flex flex-col items-center"><svg class="size-3"><use href="#relations"/></svg><span>幾何拘束の<br>表示/削除</span><svg class="size-1 mt-auto mb-1.5"><use href="#caret"/></svg></button>
    <button class="w-7 mb-0.5 pt-0.5 flex flex-col items-center border-r border-[#ddd]"><svg class="size-3"><use href="#repair"/></svg><span>ｽｹｯﾁ修<br>復</span></button>
    <button disabled class="w-[37px] mb-0.5 pt-0.5 flex flex-col items-center border-r border-[#ddd] text-[#c4c4c4]"><svg class="size-3"><use href="#snap"/></svg><span>ｸｨｯｸｽﾅｯﾌﾟ</span><svg class="size-1 mt-auto mb-1"><use href="#caret"/></svg></button>
    <button class="w-[38px] pt-0.5 flex flex-col items-center"><svg class="size-3"><use href="#rapid"/></svg><span>ﾗﾋﾟｯﾄﾞｽｹｯﾁ</span></button>
    <button class="w-[35px] pt-0.5 flex flex-col items-center"><svg class="size-3"><use href="#instant"/></svg><span>Instant2D</span></button>
    <button class="w-[33px] mb-0.5 pt-px flex flex-col items-center bg-[#acacac] border border-[#999]"><svg class="size-3"><use href="#shade"/></svg><span>ｼｪｲﾃﾞｨﾝｸﾞ<br>ｽｹｯﾁ輪<br>郭</span></button>
    <button aria-label="リボンを折りたたむ" class="ml-auto self-end mb-1 mr-1"><svg class="size-2" viewBox="0 0 8 8"><path d="M1.500 5.500 4 3l2.500 2.500" fill="none" stroke="#333" stroke-width="1.200"/></svg></button>
  </div>

  <!-- Workspace -->
  <div class="flex-1 min-h-0 flex flex-col bg-[linear-gradient(to_bottom,transparent_46%,#ffffff_74%,#f8f9fb),linear-gradient(160deg,#ffffff_28%,#dde1eb_50%,#d6dae7_60%)]">
    <div class="h-3 shrink-0 flex">
      <div class="flex items-stretch text-center">
        <a href="#" class="w-8 pt-0.5 bg-[#c6c6c6] border-r border-b border-[#a9a9a9]">ﾌｨｰﾁｬｰ</a>
        <a href="#" class="w-[29px] pt-0.5 bg-[#f8f8f8]">ｽｹｯﾁ</a>
        <a href="#" class="w-8 pt-0.5 bg-[#c6c6c6] border-r border-b border-[#a9a9a9]">ｻｰﾌｪｽ</a>
        <a href="#" class="w-[30px] pt-0.5 bg-[#c6c6c6] border-r border-b border-[#a9a9a9]">板金</a>
        <a href="#" class="w-[30px] pt-0.5 bg-[#c6c6c6] border-r border-b border-[#a9a9a9]">溶接</a>
        <a href="#" class="w-[34px] pt-0.5 bg-[#c6c6c6] border-r border-b border-[#a9a9a9]">ﾏｰｸｱｯﾌﾟ</a>
        <a href="#" class="w-[29px] pt-0.5 bg-[#c6c6c6] border-r border-b border-[#a9a9a9]">評価</a>
        <a href="#" class="w-[54px] pt-0.5 bg-[#c6c6c6] border-r border-b border-[#a9a9a9]">MBD Dimension</a>
        <a href="#" class="w-[83px] pt-0.5 bg-[#c6c6c6] border-r border-b border-[#a9a9a9]">ﾗｲﾌｻｲｸﾙおよびｺﾗﾎﾞﾚｰｼｮﾝ</a>
        <a href="#" class="w-[69px] pt-0.5 bg-[#c6c6c6] border-r border-b border-[#a9a9a9]">SOLIDWORKS ｱﾄﾞｲﾝ</a>
      </div>
      <div class="ml-auto mr-1.5 pt-1 flex gap-1.5 text-[#8b8e95]">
        <button aria-label="左パネル"><svg class="size-2"><use href="#paneL"/></svg></button>
        <button aria-label="右パネル"><svg class="size-2"><use href="#paneR"/></svg></button>
        <button aria-label="文書を最小化"><svg class="size-2"><use href="#mini"/></svg></button>
        <button aria-label="文書を元に戻す"><svg class="size-2"><use href="#restore"/></svg></button>
        <button aria-label="文書を閉じる"><svg class="size-2"><use href="#close"/></svg></button>
      </div>
    </div>

    <div class="flex-1 min-h-0 flex">
      <!-- Left tool strip -->
      <aside class="w-[18px] shrink-0 flex flex-col items-center bg-[#f7f7f7] border-l border-[#c4cfd3]">
        <div class="w-3.5 mt-0.5 mb-1.5 border-t border-dotted border-[#888]"></div>
        <button aria-label="表示方向" class="h-3.5"><svg class="size-3"><use href="#cubes"/></svg></button>
        <button disabled aria-label="正面ビュー" class="h-3.5"><svg class="size-2.5"><use href="#cubeWire"/></svg></button>
        <button disabled aria-label="背面ビュー" class="h-3.5"><svg class="size-2.5"><use href="#cubeWire"/></svg></button>
        <button disabled aria-label="左側面ビュー" class="h-3.5"><svg class="size-2.5"><use href="#cubeWire"/></svg></button>
        <button disabled aria-label="右側面ビュー" class="h-3.5"><svg class="size-2.5"><use href="#cubeWire"/></svg></button>
        <button disabled aria-label="平面ビュー" class="h-3.5"><svg class="size-2.5"><use href="#cubeWire"/></svg></button>
        <button disabled aria-label="等角投影" class="h-3.5"><svg class="size-2.5"><use href="#sphereWire"/></svg></button>
        <div class="w-3.5 mb-1 border-t border-[#aaa]"></div>
        <button aria-label="スケッチ選択" class="h-3.5"><svg class="size-2.5"><use href="#pick"/></svg></button>
        <button aria-label="スケッチ修復" class="h-3.5"><svg class="size-2.5"><use href="#repair"/></svg></button>
        <button aria-label="表示" class="h-3.5"><svg class="size-2.5"><use href="#screenL"/></svg></button>
        <div class="w-3.5 mb-1 border-t border-[#aaa]"></div>
        <button aria-label="レイヤー" class="h-3.5"><svg class="size-2.5"><use href="#layers"/></svg></button>
        <button aria-label="レイヤーのコピー" class="h-3.5"><svg class="size-2.5"><use href="#layersOut"/></svg></button>
        <div class="w-full border-t border-[#aaa]"></div>
      </aside>

      <!-- Feature tree -->
      <aside class="relative w-[125px] shrink-0 flex flex-col bg-[#f7f7f7] border-x border-t border-l-[#c9d6d9] border-r-[#b5b5b5] border-t-[#9fc3ca]">
        <div class="h-3 shrink-0 flex items-center justify-center"><span class="size-[3px] rounded-full border border-[#999]"></span></div>
        <div class="h-3.5 shrink-0 flex">
          <button aria-label="フィーチャー ツリー" class="w-[22px] flex items-center justify-center"><svg class="size-3"><use href="#part"/></svg></button>
          <button aria-label="プロパティ" class="w-[22px] flex items-center justify-center bg-[#cbcbcb] border border-[#aaa]"><svg class="size-2.5"><use href="#props"/></svg></button>
          <button aria-label="コンフィギュレーション" class="w-[22px] flex items-center justify-center bg-[#cbcbcb] border border-l-0 border-[#aaa]"><svg class="size-2.5"><use href="#config"/></svg></button>
          <button aria-label="DimXpert" class="w-[22px] flex items-center justify-center bg-[#cbcbcb] border border-l-0 border-[#aaa]"><svg class="size-2.5"><use href="#target"/></svg></button>
          <button aria-label="表示マネージャー" class="w-[22px] flex items-center justify-center bg-[#cbcbcb] border border-l-0 border-[#aaa]"><svg class="size-2.5"><use href="#ball"/></svg></button>
          <button aria-label="次へ" class="flex-1 flex items-center justify-center"><svg class="size-2" viewBox="0 0 8 8"><path d="M3 1l3 3-3 3" fill="none" stroke="#222" stroke-width="1.300"/></svg></button>
        </div>
        <label class="h-3.5 shrink-0 mx-0.5 pl-0.5 flex items-center bg-[#fbfbfb] border border-[#ccc]">
          <svg class="size-2.5 shrink-0"><use href="#funnel"/></svg>
          <input type="text" aria-label="ツリーのフィルター" class="flex-1 min-w-0 outline-none">
        </label>
        <ul class="pt-px [&>li]:h-3 [&>li]:flex [&>li]:items-center [&>li]:gap-1">
          <li class="text-[6px]"><svg class="w-3 h-2.5 shrink-0"><use href="#partLight"/></svg>Part2 (ﾃﾞﾌｫﾙﾄ) &lt;&lt;ﾃﾞﾌｫﾙﾄ&gt;_表示状態 1</li>
          <li class="pl-1"><svg class="size-1 -rotate-90"><use href="#caret"/></svg><svg class="size-2.5"><use href="#history"/></svg>履歴</li>
          <li class="pl-3"><svg class="size-2.5"><use href="#sensor"/></svg>ｾﾝｻｰ</li>
          <li class="pl-1"><svg class="size-1 -rotate-90"><use href="#caret"/></svg><svg class="size-2.5"><use href="#note"/></svg>ｱﾉﾃｰﾄ ｱｲﾃﾑ</li>
          <li class="pl-1"><svg class="size-1 -rotate-90"><use href="#caret"/></svg><svg class="size-2.5"><use href="#solids"/></svg>ｿﾘｯﾄﾞ ﾎﾞﾃﾞｨ(1)</li>
          <li class="pl-3"><svg class="size-2.5"><use href="#material"/></svg>材料 &lt;指定なし&gt;</li>
          <li class="pl-3"><svg class="size-2.5"><use href="#plane"/></svg>正面</li>
          <li class="pl-3"><svg class="size-2.5"><use href="#plane"/></svg>平面</li>
          <li class="pl-3"><svg class="size-2.5"><use href="#plane"/></svg>右側面</li>
          <li class="pl-3"><svg class="size-2.5"><use href="#origin"/></svg>原点</li>
          <li class="pl-1"><svg class="size-1 -rotate-90"><use href="#caret"/></svg><span class="h-3 pr-0.5 flex items-center gap-[3px] bg-[#a3c7e3] border border-[#7aa9cd]"><svg class="size-2.5"><use href="#extrude"/></svg>ﾎﾞｽ - 押し出し1</span></li>
          <li class="pl-3"><svg class="size-2.5"><use href="#planeBlue"/></svg>平面2</li>
          <li class="pl-1"><svg class="size-1 -rotate-90"><use href="#caret"/></svg><svg class="size-2.5"><use href="#wrap"/></svg>ﾗｯﾌﾟ3</li>
          <li class="pl-3 border-t border-[#9c96b8]"><svg class="size-2.5"><use href="#sketch"/></svg>(-) ｽｹｯﾁ5</li>
        </ul>
        <div class="mt-auto h-2.5 px-2 pt-[3px] bg-[#f0f0f0]"><div class="w-[101px] h-px bg-[#8c8c8c]"></div></div>
        <!-- Splitter handle -->
        <button aria-label="パネルを閉じる" class="absolute top-[157px] -right-[5px] w-[5px] h-[21px] flex items-center justify-center bg-[#f7f7f7] border border-l-0 border-[#aaa]"><span class="size-[3px] rounded-full border border-[#999]"></span></button>
      </aside>

      <!-- Graphics area -->
      <main class="relative flex-1 min-w-0">
        <svg class="absolute inset-0 w-full h-full" role="img" aria-label="モデル">
          <path d="M134 168a135 135 0 0 1 270 0z" fill="#52545f" stroke="#24252b" stroke-width="1.200"/>
          <path d="M134 168h41a94 94 0 0 1 188 0h41a135 135 0 0 1-270 0z" fill="#0091ff" stroke="#5f9cd0"/>
          <path d="M269.500 168v-14M269.500 168.500h5" stroke="#c81d35" stroke-width="1.200"/>
          <path d="M267.500 155l2-5.500 2 5.500zM273 166.500l5.500 2-5.500 2z" fill="#f20d1c"/>
          <circle cx="265" cy="212" r="16" fill="none" stroke="#f5050f" stroke-width="2.500"/>
          <path d="M458 19v298" stroke="#3434f2" stroke-width="1.200"/>
          <!-- Axis triad -->
          <path d="M21.500 317v-12" stroke="#0a720a" stroke-width="2"/>
          <path d="M19.500 307l2-7 2 7z" fill="#0a720a"/>
          <path d="M22 317.500h10" stroke="#d31414" stroke-width="2"/>
          <path d="M31 315l7 2.500-7 2.500z" fill="#d31414"/>
          <circle cx="21.500" cy="317.500" r="2" fill="#1414cc"/>
          <text x="20" y="298" class="text-[5px] font-bold" fill="#1b9b1b">Y</text>
          <text x="40" y="318" class="text-[5px] font-bold" fill="#f03030">X</text>
        </svg>

        <!-- View toolbar -->
        <div class="absolute top-0.5 left-[207px] flex items-center text-[#777]">
          <button aria-label="全体表示" class="w-3.5"><svg class="size-3"><use href="#zoomFit"/></svg></button>
          <button aria-label="一部拡大" class="w-3.5"><svg class="size-3"><use href="#zoomArea"/></svg></button>
          <button aria-label="前の表示" class="w-3.5"><svg class="size-3"><use href="#prevView"/></svg></button>
          <button aria-label="断面表示" class="w-3.5"><svg class="size-3"><use href="#section"/></svg></button>
          <button aria-label="表示方向" class="w-[22px] flex items-center gap-1"><svg class="size-3"><use href="#orient"/></svg><svg class="size-1"><use href="#caret"/></svg></button>
          <button aria-label="表示スタイル" class="w-[22px] flex items-center gap-1"><svg class="size-3"><use href="#display"/></svg><svg class="size-1"><use href="#caret"/></svg></button>
          <button aria-label="アイテムを非表示" class="w-[22px] flex items-center gap-1"><svg class="size-3"><use href="#eye"/></svg><svg class="size-1"><use href="#caret"/></svg></button>
          <button aria-label="外観を編集" class="w-3.5"><svg class="size-3"><use href="#ballGray"/></svg></button>
          <button aria-label="シーン適用" class="w-[22px] flex items-center gap-1"><svg class="size-3"><use href="#scene"/></svg><svg class="size-1"><use href="#caret"/></svg></button>
          <button aria-label="表示設定" class="w-[22px] flex items-center gap-1"><svg class="size-3"><use href="#monitor"/></svg><svg class="size-1"><use href="#caret"/></svg></button>
        </div>

        <!-- Breadcrumb -->
        <div class="absolute top-[9px] left-[7px]">
          <nav class="h-3.5 flex items-center bg-[#f6f6f6] border border-[#ccc]">
            <a href="#" aria-label="部品" class="pl-[7px] flex items-center"><svg class="size-2.5"><use href="#part"/></svg><svg class="w-1.5 h-3" viewBox="0 0 6 12"><path d="M1 0l4 6-4 6" fill="none" stroke="#bbb"/></svg></a>
            <a href="#" aria-label="ボディ" class="pl-px flex items-center"><svg class="size-2.5"><use href="#cubeBlue"/></svg><svg class="w-1.5 h-3" viewBox="0 0 6 12"><path d="M1 0l4 6-4 6" fill="none" stroke="#bbb"/></svg></a>
            <a href="#" class="flex items-center gap-0.5"><svg class="size-2.5"><use href="#extrude"/></svg>ﾎﾞｽ - 押し出し1</a>
            <a href="#" aria-label="面" class="h-3 w-6 flex items-center bg-[#9dc5e4]"><svg class="w-1.5 h-3" viewBox="0 0 6 12"><path d="M0 0l5 6-5 6z" fill="#f6f6f6" stroke="#8ab"/></svg><svg class="size-2.5" viewBox="0 0 10 10"><path d="M1 1h8v8H1z" fill="#3489b5" stroke="#2c6a8c"/></svg></a>
          </nav>
          <div class="mt-0.5 pl-16 flex items-center gap-px">
            <svg class="size-2.5"><use href="#bigArrow"/></svg>
            <a href="#" class="h-3.5 px-0.5 flex items-center gap-1 bg-[#fafafa] border border-[#c4c4c4]"><svg class="size-2.5" viewBox="0 0 10 10"><path d="M10 1H1v6q0 2 2 2h7" fill="none" stroke="#777"/></svg>ｽｹｯﾁ1</a>
          </div>
        </div>

        <!-- Confirmation corner -->
        <button aria-label="スケッチ終了" class="absolute top-[17px] right-8"><svg class="w-6 h-5" viewBox="0 0 24 20"><path d="M12 1H1v9q0 4 4 4h8" fill="none" stroke="#a9c9dc" stroke-width="1.300"/><path d="M12 15l5-5v3q5 0 6-4 1 8-6 9v2z" fill="#bcd6e2" stroke="#93b9cc"/></svg></button>
        <button aria-label="キャンセル" class="absolute top-[35px] right-[19px]"><svg class="size-3.5" viewBox="0 0 14 14"><path d="M2 2l10 10M12 2 2 12" stroke="#e9aeb2" stroke-width="4.500"/></svg></button>

        <!-- Task pane -->
        <div class="absolute top-4 right-0 w-3.5 border border-r-0 border-[#999] bg-[#cfcfcf] divide-y divide-[#999] [&>button]:h-[13px] [&>button]:w-full [&>button]:flex [&>button]:items-center [&>button]:justify-center">
          <button aria-label="リソース"><svg class="size-2.5"><use href="#resources"/></svg></button>
          <button aria-label="デザイン ライブラリ"><svg class="size-2.5"><use href="#library"/></svg></button>
          <button aria-label="ファイル エクスプローラ"><svg class="size-2.5"><use href="#folderOpen"/></svg></button>
          <button aria-label="ビュー パレット"><svg class="size-2.5"><use href="#palette"/></svg></button>
          <button aria-label="外観"><svg class="size-2.5"><use href="#ball"/></svg></button>
          <button aria-label="カスタム プロパティ"><svg class="size-2.5"><use href="#props"/></svg></button>
          <button aria-label="フォーラム"><svg class="size-2.5"><use href="#chat"/></svg></button>
          <button aria-label="ホーム" class="bg-white"><svg class="size-2.5"><use href="#home"/></svg></button>
          <button aria-label="3DEXPERIENCE"><svg class="size-2.5"><use href="#globe"/></svg></button>
        </div>
      </main>
    </div>
  </div>

  <!-- Model tabs -->
  <div class="h-2.5 shrink-0 flex bg-[#f8f8f8] border-t border-[#b3b3b3] pl-[19px] text-center leading-[8px]">
    <div class="w-9 flex bg-[#a8a8a8] text-[#777] divide-x divide-[#8a8a8a]">
      <button aria-label="先頭" class="flex-1 flex items-center justify-center"><svg class="size-1 rotate-90"><use href="#caret"/></svg></button>
      <button aria-label="前" class="flex-1 flex items-center justify-center"><svg class="size-1 rotate-90"><use href="#caret"/></svg></button>
      <button aria-label="次" class="flex-1 flex items-center justify-center"><svg class="size-1 -rotate-90"><use href="#caret"/></svg></button>
      <button aria-label="末尾" class="flex-1 flex items-center justify-center"><svg class="size-1 -rotate-90"><use href="#caret"/></svg></button>
    </div>
    <a href="#" class="w-6">ﾓﾃﾞﾙ</a>
    <a href="#" class="w-[55px] bg-[#cacaca] border-x border-[#aaa]">ﾓｰｼｮﾝ ｽﾀﾃﾞｨ1</a>
  </div>

  <!-- Status bar -->
  <footer class="h-2.5 shrink-0 flex items-center border-t border-[#b3b3b3] bg-[#f4f4f4]">
    <span class="pl-px">SOLIDWORKS Premium 2025 SP5.0</span>
    <div class="ml-auto flex items-center">
      <span class="w-[29px]">未定義</span>
      <span class="w-[57px]">編集中： ｽｹｯﾁ5</span>
      <svg class="size-2 mr-[59px]"><use href="#traffic"/></svg>
      <span class="w-10">ﾕｰｻﾞｰ定義</span>
      <svg class="size-1 mr-3 rotate-180"><use href="#caret"/></svg>
      <svg class="size-2.5 mr-3"><use href="#tag"/></svg>
    </div>
  </footer>
</body>
</html>
